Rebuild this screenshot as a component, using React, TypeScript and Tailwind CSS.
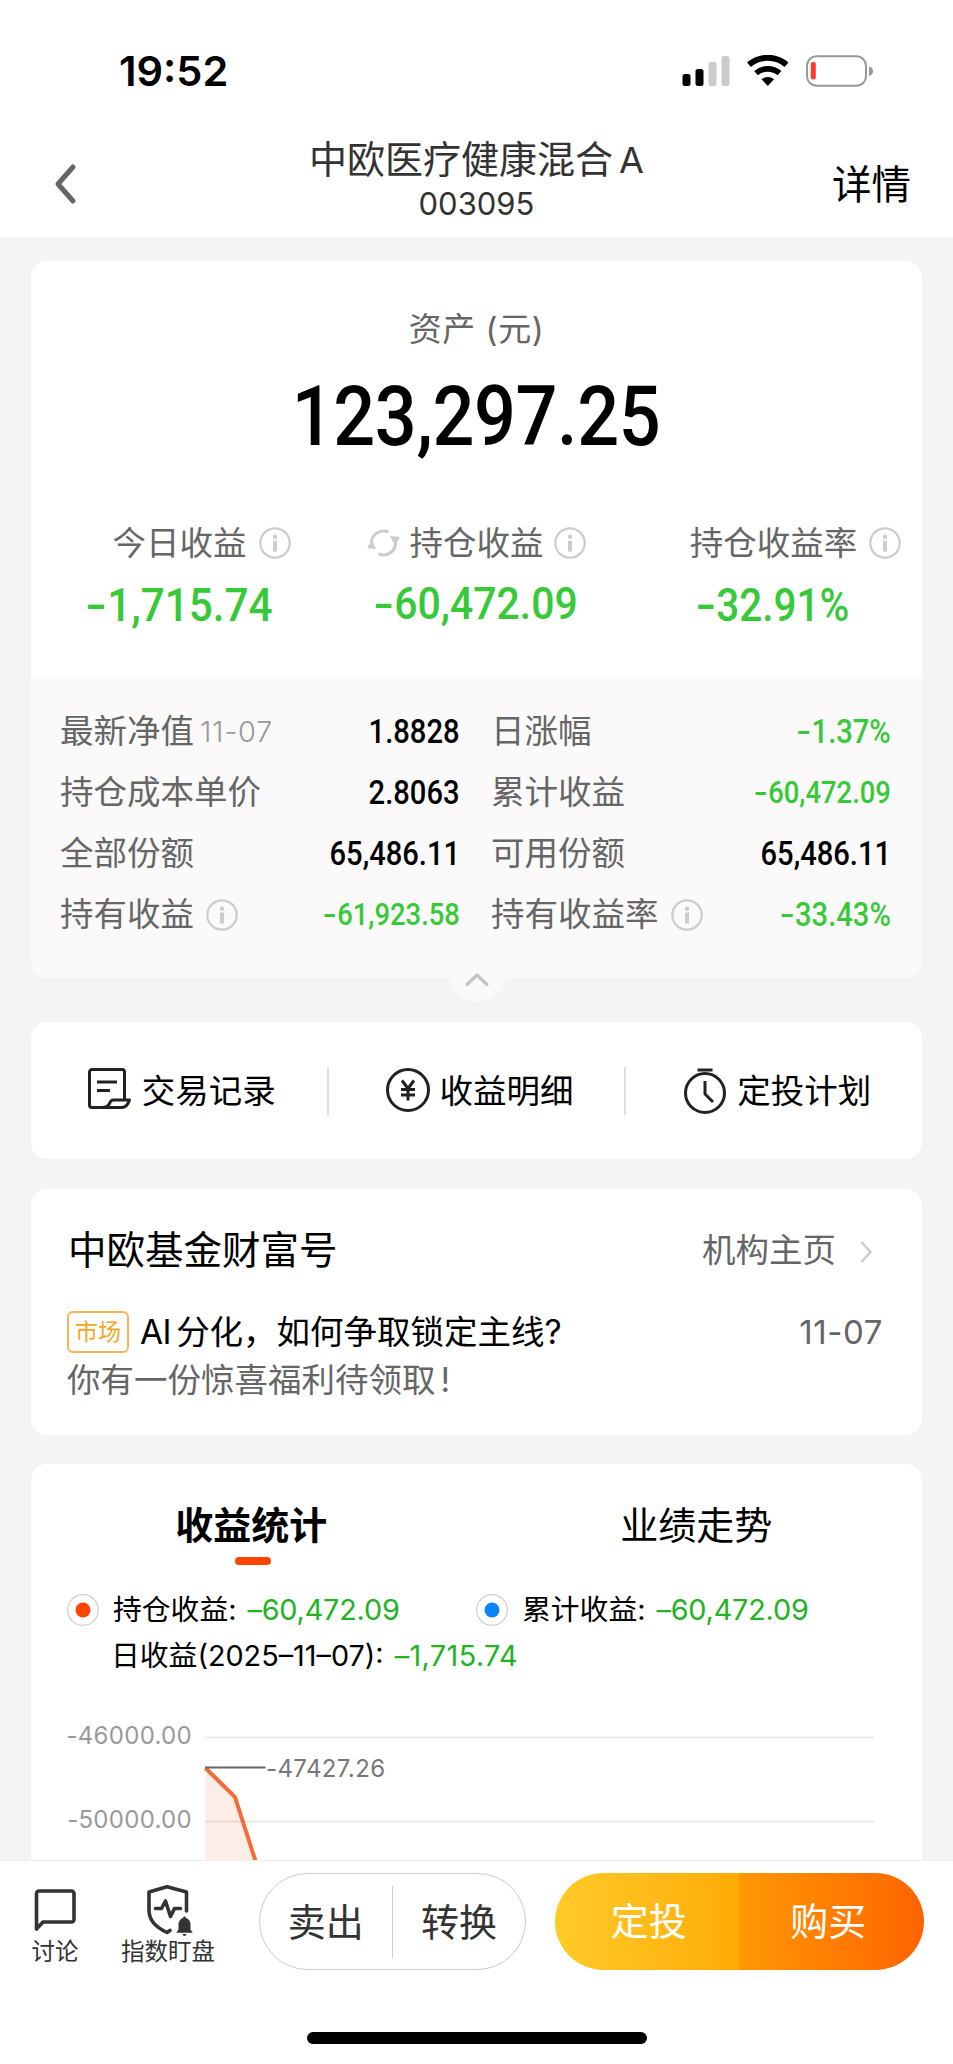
import React from 'react';

type NumProps = { children: string; className?: string };

// Narrow numerals used for all amounts, with a wider minus sign
const Num = ({ children, className = '' }: NumProps) => {
  const negative = children.startsWith('-');
  return (
    <span className={`inline-block whitespace-nowrap font-['Roboto'] ${className}`}>
      {negative && <span className="inline-block scale-x-[1.45] mr-[0.09em] ml-[0.04em]">-</span>}
      {negative ? children.slice(1) : children}
    </span>
  );
};

const InfoIcon = ({ className = '' }: { className?: string }) => (
  <svg viewBox="0 0 32 32" className={`w-8 h-8 shrink-0 ${className}`} fill="none">
    <circle cx="16" cy="16" r="14.7" stroke="#ccc" strokeWidth="2.2" />
    <circle cx="16" cy="9.8" r="2.2" fill="#ccc" />
    <rect x="14" y="13.6" width="4" height="11" fill="#ccc" />
  </svg>
);

const RefreshIcon = ({ className = '' }: { className?: string }) => (
  <svg viewBox="0 0 33 32" className={`w-[33px] h-8 shrink-0 ${className}`} fill="none">
    <path d="M4.5 17A12 12 0 0 1 21.5 5.2" stroke="#ccc" strokeWidth="3" />
    <path d="M28.5 15A12 12 0 0 1 11.5 26.8" stroke="#ccc" strokeWidth="3" />
    <path d="M0 21L5 13.5l4 8.5z" fill="#ccc" />
    <path d="M33 10L28 18l-5-9z" fill="#ccc" />
  </svg>
);

const StatusBar = () => (
  <div className="h-[124px] pt-[46px] pl-[119px] pr-[80px] flex justify-between items-start">
    <span className="font-['Inter'] font-semibold text-[41.5px] leading-[50px] text-black">19:52</span>
    <svg viewBox="0 0 191 32" className="w-[191px] h-8 mt-[9px]">
      <rect x="0.5" y="19" width="8" height="12" rx="2.5" />
      <rect x="13.5" y="14" width="8" height="17" rx="2.5" />
      <rect x="26.5" y="7" width="8" height="24" rx="2.5" fill="#ccc" />
      <rect x="39.5" y="1" width="8" height="30" rx="2.5" fill="#ccc" />
      <path d="M67 9.8a28.5 28.5 0 0 1 37.5 0" fill="none" stroke="#000" strokeWidth="6" />
      <path d="M74 18.2a18 18 0 0 1 23.5 0" fill="none" stroke="#000" strokeWidth="5.6" />
      <path d="M79.5 24.3a10 10 0 0 1 12.5 0L85.8 31z" />
      <rect x="125" y="1.2" width="59" height="29.6" rx="9.5" fill="none" stroke="#999" strokeWidth="2" />
      <rect x="128.8" y="7" width="5" height="17.5" rx="2" fill="#ff3b30" />
      <path d="M187 11.5q4 1.200 4 4.700t-4 4.700z" fill="#999" />
    </svg>
  </div>
);

const Header = () => (
  <div className="h-[113px] flex justify-between items-start px-[41px]">
    <svg viewBox="0 0 50 60" className="w-[90px] h-[60px] mt-[30px]" fill="none" preserveAspectRatio="xMinYMid">
      <path d="M32 13L17 30l15 17" stroke="#666" strokeWidth="5" strokeLinecap="round" strokeLinejoin="round" />
    </svg>
    <div className="flex flex-col items-center text-[#333]">
      <h1 className="text-[38px] leading-[50px] mt-[10px]">
        中欧医疗健康混合<span className="ml-[6px] text-[36px]">A</span>
      </h1>
      <div className="text-[31px] leading-[36px] mt-[0.5px]">003095</div>
    </div>
    <div className="w-[90px] text-right text-[39.5px] leading-[50px] mt-[36px] pr-[1px] text-black">详情</div>
  </div>
);

const details = [
  { label: '最新净值', date: '11-07', value: '1.8828' },
  { label: '日涨幅', value: '-1.37%', green: true },
  { label: '持仓成本单价', value: '2.8063' },
  { label: '累计收益', value: '-60,472.09', green: true, small: true },
  { label: '全部份额', value: '65,486.11' },
  { label: '可用份额', value: '65,486.11' },
  { label: '持有收益', value: '-61,923.58', info: true, green: true, small: true },
  { label: '持有收益率', value: '-33.43%', info: true, green: true },
];

const AssetCard = () => (
  <div className="relative h-[717px] bg-white rounded-2xl">
    <div className="h-[417px] pt-[43px] text-center">
      <div className="text-[33px] leading-[50px] text-[#666] tracking-[0.5px]">资产 (元)</div>
      <Num className="text-[83px] leading-[100px] mt-[13px] font-medium tracking-[-0.5px] scale-x-[0.89]">123,297.25</Num>
      <div className="grid grid-cols-3 mt-[51px] text-[33.5px] leading-[50px] text-[#666]">
        <div>
          <div className="flex justify-center items-center gap-3">
            今日收益
            <InfoIcon className="-mr-[44px]" />
          </div>
          <Num className="text-[47px] leading-[56px] mt-[9px] font-medium text-[#37c937] scale-x-[0.9]">-1,715.74</Num>
        </div>
        <div>
          <div className="flex justify-center items-center gap-2.5">
            <RefreshIcon className="-ml-[43px]" />
            持仓收益
            <InfoIcon className="-mr-[42px]" />
          </div>
          <Num className="text-[45px] leading-[56px] mt-[8px] font-medium text-[#37c937] scale-x-[0.91]">-60,472.09</Num>
        </div>
        <div>
          <div className="flex justify-center items-center gap-3">
            持仓收益率
            <InfoIcon className="-mr-[44px]" />
          </div>
          <Num className="text-[47px] leading-[56px] mt-[9px] font-medium text-[#37c937] scale-x-[0.86]">-32.91%</Num>
        </div>
      </div>
    </div>
    <div className="h-[300px] bg-[#fbf9fa] rounded-b-2xl pt-[23px] px-[29px] grid grid-cols-[400px_400px] gap-x-[31px] auto-rows-[61px]">
      {details.map((row) => (
        <div key={row.label} className="flex items-center text-[33.5px] leading-[61px] text-[#666]">
          <span>{row.label}</span>
          {row.date && <span className="ml-1.5 text-[29px] text-[#999] font-light tracking-[0.7px]">{row.date}</span>}
          {row.info && <InfoIcon className="ml-3" />}
          <Num
            className={`ml-auto font-medium origin-right scale-x-[0.87] ${row.small ? 'text-[31.5px]' : 'text-[33.5px]'} ${row.green ? 'text-[#37c937]' : 'text-black'}`}
          >
            {row.value}
          </Num>
        </div>
      ))}
    </div>
    {/* Collapse handle */}
    <div className="absolute left-[417px] bottom-[-24px] w-[58px] h-[58px] rounded-full bg-[#fbf9fa] flex justify-center">
      <svg viewBox="0 0 28 18" className="w-7 h-[18px] mt-[26px]" fill="none">
        <path d="M4 14.5L14 5l10 9.5" stroke="#c4c4c4" strokeWidth="3.2" strokeLinecap="round" strokeLinejoin="round" />
      </svg>
    </div>
  </div>
);

const actions = [
  {
    label: '交易记录',
    icon: (
      <>
        <path d="M36.5 31V4a2.500 2.500 0 0 0-2.500-2.500H4A2.500 2.500 0 0 0 1.500 4v33A2.500 2.500 0 0 0 4 39.500h30q5 0 7.500-7.500H25q-2 0-3.500 3.500-2 4-7.500 4" />
        <path d="M9 14h20M9 22.5h13" />
      </>
    ),
  },
  {
    label: '收益明细',
    icon: (
      <>
        <circle cx="22" cy="22" r="20.5" />
        <path d="M16 12.5l6 8 6-8M22 20.500v12M15 21.500h14M15 27h14" />
      </>
    ),
  },
  {
    label: '定投计划',
    icon: (
      <>
        <circle cx="22" cy="25" r="19.5" />
        <path d="M14.5 2h15M22 13v13l8 8" />
      </>
    ),
  },
];

const ActionsCard = () => (
  <div className="h-[137px] bg-white rounded-2xl flex items-center mt-[44px]">
    {actions.map((action, index) => (
      <div
        key={action.label}
        className={`flex-1 h-12 flex items-center justify-center gap-[10px] pl-1.5 text-[33.5px] leading-[48px] text-black ${index > 0 ? 'border-l-2 border-[#ddd]' : ''}`}
      >
        <svg viewBox="0 0 44 46" className="w-11 h-[46px]" fill="none" stroke="#222" strokeWidth="3" strokeLinejoin="round">
          {action.icon}
        </svg>
        {action.label}
      </div>
    ))}
  </div>
);

const NewsCard = () => (
  <div className="h-[246px] bg-white rounded-2xl mt-[30px] pt-[36px] pl-[36px] pr-[39px]">
    <div className="flex items-center leading-[50px]">
      <h2 className="text-[38.5px] ml-[1px] text-black">中欧基金财富号</h2>
      <span className="ml-auto text-[33.5px] text-[#666]">机构主页</span>
      <svg viewBox="0 0 16 26" className="w-4 h-[26px] ml-[22px] mr-[9px] mt-[4px]" fill="none">
        <path d="M3.5 3l9 10-9 10" stroke="#ccc" strokeWidth="2.5" />
      </svg>
    </div>
    <div className="flex items-center mt-[33px] leading-[48px] text-[33.5px]">
      <span className="w-[62px] h-[42px] border-2 border-[#f8b551] rounded-md text-[23px] leading-[39px] text-center text-[#f5a623]">市场</span>
      <span className="ml-[11px] text-black">
        <span className="tracking-[-0.5px]">AI</span>
        <span className="ml-[5px]">分化，如何争取锁定主线?</span>
      </span>
      <span className="ml-auto text-[#666] text-[33px] tracking-[0.6px]">11-07</span>
    </div>
    <p className="text-[33.5px] leading-[48px] text-[#666]">
      你有一份惊喜福利待领取<span className="ml-[5px]">!</span>
    </p>
  </div>
);

const Legend = ({ label, color }: { label: string; color: string }) => (
  <div className="flex items-center w-[409px] text-[28.8px] leading-[46px] text-black">
    <svg viewBox="0 0 32 32" className="w-8 h-8 mr-[14px]">
      <circle cx="16" cy="16" r="15.3" fill="#fff" stroke="#ccc" strokeWidth="1.2" />
      <circle cx="16" cy="16" r="7.5" fill={color} />
    </svg>
    {label}:
    <span className="ml-[11px] text-[#22b222] tracking-[-0.2px]">–60,472.09</span>
  </div>
);

const ChartCard = () => (
  <div className="h-[396px] bg-white rounded-t-2xl mt-[29px] pt-[37px] overflow-hidden">
    <div className="flex text-[38px] leading-[50px] text-black text-center">
      <div className="flex-1 flex flex-col items-center">
        <span className="font-bold -ml-[3px] -mt-[1px]">收益统计</span>
        <span className="w-9 h-2 rounded-full bg-[#ff4500] mt-[7px]" />
      </div>
      <div className="flex-1 pr-[4px] -mt-[1px]">业绩走势</div>
    </div>
    <div className="flex pl-[36px] mt-[22px]">
      <Legend label="持仓收益" color="#ff4500" />
      <Legend label="累计收益" color="#0a84ff" />
    </div>
    <div className="pl-[80px] text-[28.8px] leading-[46px] text-black">
      日收益(2025–11–07):<span className="ml-[11px] text-[#22b222] tracking-[0.4px]">–1,715.74</span>
    </div>
    <svg viewBox="0 0 891 181" className="block w-[891px] h-[181px] font-['Inter']" fill="none">
      <path d="M174 58.500H843M174 142.500H843" stroke="#eaeaea" strokeWidth="2" />
      <path d="M174.500 89L204 118l20.500 63h-50z" fill="#f26b3a" fillOpacity="0.120" />
      <path d="M174.500 89L204 118l20.500 64" stroke="#f56c38" strokeWidth="4" />
      <path d="M174 88.500h60.500" stroke="#666" strokeWidth="2" />
      <text x="161" y="65" textAnchor="end" fontSize="24" letterSpacing="0.300" fill="#999">-46000.00</text>
      <text x="161" y="149" textAnchor="end" fontSize="24" letterSpacing="0.300" fill="#999">-50000.00</text>
      <text x="235" y="97.500" fontSize="24" letterSpacing="0.400" fill="#777">-47427.26</text>
    </svg>
  </div>
);

const BottomBar = () => (
  <div className="relative h-[204px] bg-white border-t border-[#eee] pt-[12px] px-[29px]">
    <div className="flex items-start text-[#333]">
      <div className="w-[52px] flex flex-col items-center text-[23.5px] leading-[30px] pt-3">
        <svg viewBox="0 0 44 50" className="w-11 h-[50px]" fill="none" stroke="#333" strokeWidth="3.6" strokeLinejoin="round">
          <path d="M3.5 44V8.500A2.500 2.500 0 0 1 6 6h32.500A2.500 2.500 0 0 1 41 8.500v26a2.500 2.500 0 0 1-2.500 2.500H10z" />
        </svg>
        <span className="whitespace-nowrap mt-[2px]">讨论</span>
      </div>
      <div className="w-[96px] ml-[39px] flex flex-col items-center text-[23.5px] leading-[30px] pt-3">
        <svg viewBox="0 0 48 52" className="w-12 h-[52px] ml-[4px]" fill="none" stroke="#333" strokeWidth="3.6" strokeLinejoin="round" strokeLinecap="round">
          <path d="M40.5 26V7L21 1.800 3 7v18c0 11 7 17 18 22.500l3-2" />
          <path d="M9.5 23.500h6l4-7.500 5 15.500 4-8h6" />
          <path stroke="none" fill="#333" d="M38.500 31.500c-.8 0-1.500.6-1.500 1.500-3 1-4.500 3.500-4.500 6.500v5l-2.300 3.300h16.600l-2.300-3.300v-5c0-3-1.500-5.500-4.500-6.500 0-.9-.7-1.500-1.500-1.500zM36.500 49h4q-.5 2-2 2t-2-2z" />
        </svg>
        <span className="whitespace-nowrap">指数盯盘</span>
      </div>
      <div className="ml-[43px] w-[267px] h-[97px] shrink-0 rounded-full border-[1.5px] border-[#ccc] flex items-center text-[38px] leading-[50px] text-center">
        <span className="flex-1">卖出</span>
        <span className="w-[1.5px] h-[72px] bg-[#ccc]" />
        <span className="flex-1">转换</span>
      </div>
      <div className="ml-[29px] w-[369px] h-[97px] shrink-0 rounded-full overflow-hidden flex text-[38px] leading-[97px] text-center text-white">
        <span className="flex-1 bg-linear-to-r from-[#ffcb27] to-[#ffab02] pl-[4px]">定投</span>
        <span className="flex-1 bg-linear-to-r from-[#ff9704] to-[#ff6300] pr-[6px]">购买</span>
      </div>
    </div>
    <div className="w-[340px] h-[12px] rounded-full bg-black mx-auto mt-[62px]" />
  </div>
);

export default function App() {
  return (
    <div className="w-[953px] h-[2064px] overflow-hidden bg-white font-['Inter','Noto_Sans_CJK_SC',sans-serif]">
      <StatusBar />
      <Header />
      <div className="h-[1623px] bg-[#f4f4f4] pt-6 px-[31px] overflow-hidden">
        <AssetCard />
        <ActionsCard />
        <NewsCard />
        <ChartCard />
      </div>
      <BottomBar />
    </div>
  );
}
